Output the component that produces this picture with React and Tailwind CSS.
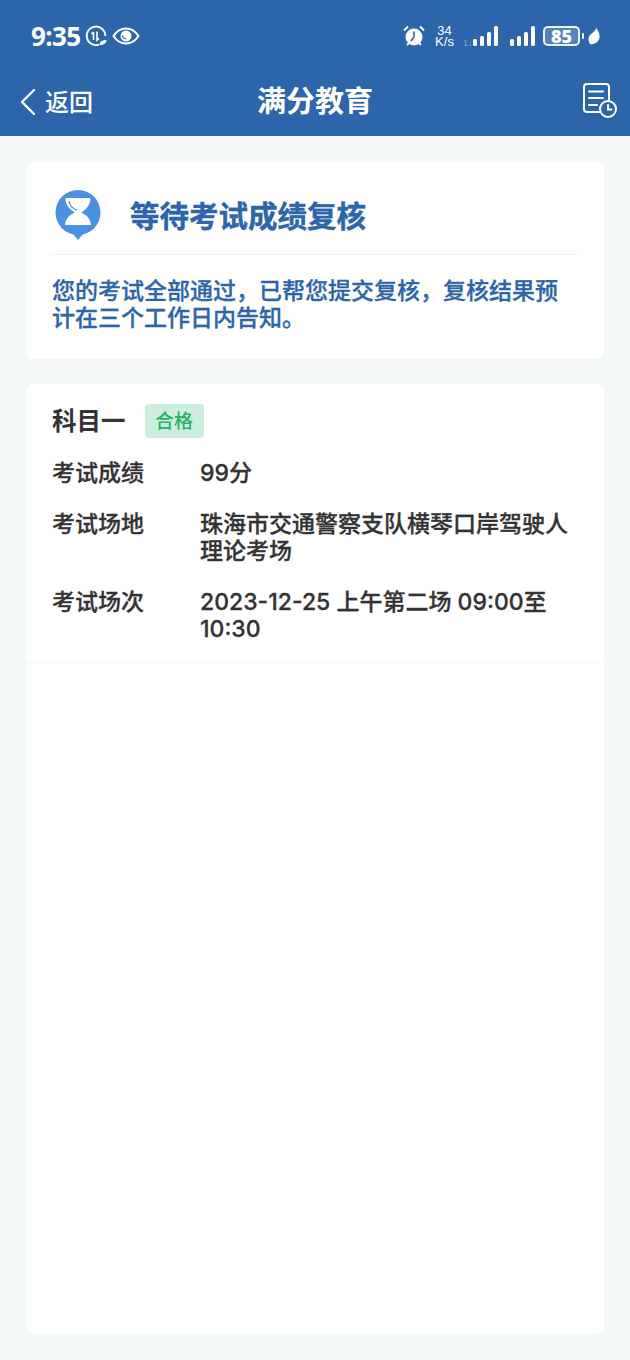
import React from 'react';

const FONT = '[font-family:Inter,"Noto_Sans_CJK_SC","Noto_Sans",sans-serif]';

const SignalBars = ({ className }) => (
  <svg width="25" height="20" viewBox="0 0 25 20" className={className} fill="#fff">
    <rect x="0" y="13" width="4" height="7" rx="1.500" />
    <rect x="7" y="10" width="4" height="10" rx="1.500" />
    <rect x="14" y="6" width="4" height="14" rx="1.500" />
    <rect x="21" y="0" width="4" height="20" rx="1.500" />
  </svg>
);

const StatusBar = () => (
  <div className="relative h-[72px] pt-[22px] px-[31px]">
    <div className="flex items-center h-7">
      <span className="text-white font-bold text-[26px] leading-7 [font-family:'Open_Sans',sans-serif] tracking-[-0.6px]">9:35</span>
      <svg width="22" height="22" viewBox="0 0 22 22" fill="none" stroke="#fff" strokeWidth="1.800" className="ml-[4px]">
        <path d="M14 19.600A9.300 9.300 0 1 1 20.300 11" />
        <path d="M8.500 7v8M8.500 7 6.500 9M12 6.500V15l2-1.500" strokeWidth="1.700" />
        <path d="M14.500 20c0-3.500 2.500-5 7-5 0 3.500-2.500 5-7 5z" fill="#fff" stroke="none" />
      </svg>
      <svg width="28" height="20" viewBox="0 0 28 20" fill="none" className="ml-[5px]">
        <path d="M1.500 10C5 4.500 9 2.500 14 2.500S23 4.500 26.500 10C23 15.500 19 17.500 14 17.500S5 15.500 1.500 10z" stroke="#fff" strokeWidth="2" />
        <circle cx="14" cy="10" r="5.500" fill="#fff" />
        <path d="M10.500 9.500a4 4 0 0 0 4 3.500" stroke="#2c65aa" strokeWidth="1.200" />
      </svg>
    </div>
    <div className="absolute left-[403px] top-[24px] flex items-start">
      <svg width="22" height="24" viewBox="0 0 22 24" fill="#fff">
        <circle cx="11" cy="13" r="8.500" />
        <path d="M1 6.500 5 2.500M21 6.500 17 2.500M4 21l2-2M18 21l-2-2" stroke="#fff" strokeWidth="1.800" />
        <path d="M11 7.500V13l-3 4" stroke="#2c65aa" strokeWidth="1.600" fill="none" />
      </svg>
      <div className="ml-[9px] w-[21px] text-white text-[13px] leading-[11px] text-center [font-family:'Liberation_Sans',sans-serif] mt-[1px]">
        <div>34</div>
        <div>K/s</div>
      </div>
      <span className="ml-[8px] mt-[15px] w-[10px] text-[9px] leading-[8px] text-[#7fa3d0] [font-family:'Liberation_Sans',sans-serif]">1↓</span>
      <SignalBars className="mt-[2px]" />
      <SignalBars className="ml-[12px] mt-[2px]" />
      <div className="ml-[8px] mt-[2px] w-[37px] h-[20px] rounded-[5px] border-2 border-white/90 flex items-center justify-center bg-white/20">
        <span className="text-white font-extrabold text-[18px] leading-none [font-family:'Open_Sans',sans-serif]">85</span>
      </div>
      <div className="ml-[2px] mt-[9px] w-[2px] h-[6px] bg-white rounded-sm" />
      <svg width="12" height="17" viewBox="0 0 12 17" fill="#fff" className="ml-[4px] mt-[4px]">
        <path d="M8.500 0C10 3 12 5.500 11.500 9.500 11 13.500 7 16.500 2.500 16.500.5 14-.5 10 2 7 4.500 5 7 3 8.500 0z" />
      </svg>
    </div>
  </div>
);

const NavBar = () => (
  <div className="relative h-[64px] flex items-center justify-center">
    <div className="absolute left-[19px] top-[14px] flex items-center">
      <svg width="18" height="28" viewBox="0 0 18 28" fill="none" stroke="#fff" strokeWidth="2.400" strokeLinecap="round" strokeLinejoin="round">
        <path d="M15 2 3 14l12 12" />
      </svg>
      <span className="ml-[8px] mt-[3px] text-white text-[24px] leading-7 font-medium">返回</span>
    </div>
    <h1 className="text-white text-[29px] font-bold leading-8 -mt-[5px]">满分教育</h1>
    <svg width="36" height="36" viewBox="0 0 36 36" fill="none" stroke="#fff" strokeWidth="2" strokeLinecap="round" className="absolute left-[583px] top-[11px]">
      <path d="M18 29H4a3 3 0 0 1-3-3V4a3 3 0 0 1 3-3h19a3 3 0 0 1 3 3v13" />
      <path d="M6 8.500h14M6 15h14M6 22h8" />
      <circle cx="25" cy="26" r="8" fill="#2c65aa" />
      <path d="M25 22v4.500h3.500" />
    </svg>
  </div>
);

const InfoRow = ({ label, children }) => (
  <div className="flex text-[#333] text-[23px] leading-[27px] font-medium [-webkit-text-stroke:0.3px_#333]">
    <div className="w-[148px] shrink-0">{label}</div>
    <div className="flex-1">{children}</div>
  </div>
);

const App = () => {
  return (
    <div className={`${FONT} w-[630px] h-[1360px] bg-[#f4f8f9] flex flex-col overflow-hidden`}>
      <header className="bg-[#2c65aa] h-[136px] shrink-0">
        <StatusBar />
        <NavBar />
      </header>

      <div className="flex-1 px-[26px] pt-[26px] pb-[26px] flex flex-col gap-[25px]">
        {/* review status */}
        <section className="bg-white rounded-lg h-[197px] px-[26px] shrink-0">
          <div className="h-[93px] flex items-start border-b border-[#f0f3f4]">
            <svg width="46" height="52" viewBox="0 0 46 52" className="ml-[3px] mt-[28px]">
              <circle cx="23" cy="22.500" r="22.500" fill="#4b91e2" />
              <path d="M18 44h10l-5 6z" fill="#4b91e2" />
              <path d="M12 8h22c1 0 1.500.5 1.500 1.500C35 15 31 20 26 22.500c5 2 9.500 6 10 12.500H10c.5-6.500 5-10.500 10-12.500C15 20 11 15 10.500 9.500 10.500 8.500 11 8 12 8z" fill="#fff" />
              <path d="M14 11c.5 4 3 7.500 8 9" stroke="#4b91e2" strokeWidth="1.300" fill="none" />
            </svg>
            <h2 className="ml-[29px] mt-[36px] text-[#2c65aa] text-[29.500px] font-bold leading-9 [-webkit-text-stroke:0.4px_#2c65aa]">等待考试成绩复核</h2>
          </div>
          <p className="mt-[23px] text-[#2c65aa] text-[23px] leading-[27px] font-medium [-webkit-text-stroke:0.3px_#2c65aa]">
            您的考试全部通过，已帮您提交复核，复核结果预计在三个工作日内告知。
          </p>
        </section>

        {/* exam result */}
        <section className="bg-white rounded-lg flex-1">
          <div className="h-[279px] px-[26px] border-b border-[#f4f6f7]">
            <div className="pt-[20px] flex items-center h-[54px]">
              <span className="text-[#333] text-[24.500px] font-bold leading-[34px]">科目一</span>
              <span className="ml-[19px] w-[59px] h-[34px] rounded bg-[#cdeede] text-[#2bb069] text-[19px] font-medium leading-[35px] text-center">合格</span>
            </div>
            <div className="mt-[22px] flex flex-col gap-[24px]">
              <InfoRow label="考试成绩">99分</InfoRow>
              <InfoRow label="考试场地">珠海市交通警察支队横琴口岸驾驶人理论考场</InfoRow>
              <InfoRow label="考试场次">2023-12-25 上午第二场 09:00至10:30</InfoRow>
            </div>
          </div>
        </section>
      </div>
    </div>
  );
};

export default App;
